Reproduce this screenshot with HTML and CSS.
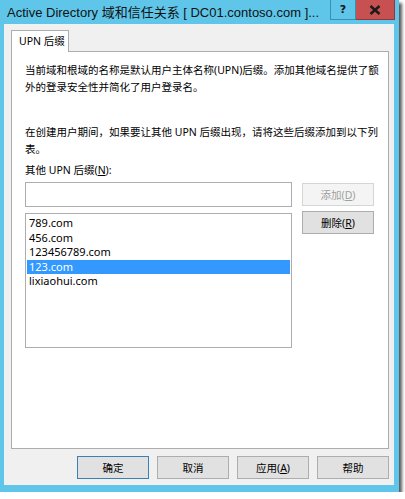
FILE: index.html
```html
<!DOCTYPE html>
<html lang="zh-CN">
<head>
<meta charset="utf-8">
<link rel="stylesheet" href="styles.css">
</head>
<body>
<div class="window">
  <div class="titlebar">
    <div class="title">Active Directory 域和信任关系 [ DC01.contoso.com ]...</div>
    <div class="caption-btns">
      <div class="cbtn help">?</div>
      <div class="cbtn close">
        <svg width="12" height="10" viewBox="0 0 12 10"><path d="M1.5 1 L10.5 9 M10.5 1 L1.5 9" stroke="#1a1a1a" stroke-width="2.4"/></svg>
      </div>
    </div>
  </div>
  <div class="client">
    <div class="tabs">
      <div class="tab">UPN 后缀</div>
    </div>
    <div class="panel">
      <p class="desc">当前域和根域的名称是默认用户主体名称(UPN)后缀。添加其他域名提供了额<br>外的登录安全性并简化了用户登录名。</p>
      <p class="desc second">在创建用户期间，如果要让其他 UPN 后缀出现，请将这些后缀添加到以下列<br>表。</p>
      <div class="label">其他 UPN 后缀(<u>N</u>):</div>
      <div class="row">
        <div class="input"></div>
        <div class="btn disabled">添加(<u>D</u>)</div>
      </div>
      <div class="row">
        <div class="list">
          <div class="item">789.com</div>
          <div class="item">456.com</div>
          <div class="item">123456789.com</div>
          <div class="item selected">123.com</div>
          <div class="item">lixiaohui.com</div>
        </div>
        <div class="btn">删除(<u>R</u>)</div>
      </div>
    </div>
    <div class="footer">
      <div class="btn default">确定</div>
      <div class="btn">取消</div>
      <div class="btn">应用(<u>A</u>)</div>
      <div class="btn">帮助</div>
    </div>
  </div>
</div>
</body>
</html>
```

FILE: styles.css
```css
html, body {
  margin: 0;
  padding: 0;
  background: #ffffff;
}
body {
  font-family: "Noto Sans", "Noto Sans CJK SC", sans-serif;
  font-size: 10.5px;
  color: #000;
}
.window {
  width: 399px;
  height: 492px;
  box-sizing: border-box;
  background: #5fc6ea;
  padding: 0 5px 7px 4px;
  display: flex;
  flex-direction: column;
  box-shadow: 3px 3px 3px rgba(0,0,0,0.65);
}
.titlebar {
  height: 24px;
  display: flex;
  align-items: flex-start;
  flex: none;
}
.title {
  flex: 1;
  min-width: 0;
  overflow: hidden;
  font-family: "Liberation Sans", "Noto Sans CJK SC", sans-serif;
  font-size: 13px;
  line-height: 22px;
  padding-left: 3px;
  padding-top: 2px;
  color: #111;
  white-space: nowrap;
}
.caption-btns {
  display: flex;
  flex: none;
  margin-right: -1px;
}
.cbtn {
  height: 20px;
  display: flex;
  align-items: center;
  justify-content: center;
  box-sizing: border-box;
}
.help {
  width: 26px;
  border: 1px solid #3a8fb5;
  border-top: none;
  font-family: "DejaVu Sans", sans-serif;
  font-weight: bold;
  font-size: 11px;
  color: #111;
}
.close {
  width: 39px;
  background: #c75050;
  border: 1px solid #8e3a3a;
  border-top: none;
  border-left: none;
}
.client {
  flex: 1;
  background: #f0f0f0;
  padding: 6px 5px 6px 7px;
  display: flex;
  flex-direction: column;
}
.tabs {
  display: flex;
  height: 21px;
  position: relative;
  z-index: 1;
}
.tab {
  width: 58px;
  box-sizing: border-box;
  height: 22px;
  border: 1px solid #adadad;
  border-bottom: none;
  background: #fff;
  padding-left: 7px;
  line-height: 21px;
  white-space: nowrap;
}
.panel {
  height: 398px;
  box-sizing: border-box;
  background: #fff;
  border: 1px solid #adadad;
  padding: 10px 14px 0 13px;
}
.desc {
  margin: 0;
  line-height: 17px;
  white-space: nowrap;
}
.desc.second {
  margin-top: 28px;
}
.label {
  margin-top: 4px;
  line-height: 17px;
}
.row {
  display: flex;
  align-items: flex-start;
  gap: 10px;
}
.input {
  margin-top: 3px;
  width: 267px;
  height: 25px;
  box-sizing: border-box;
  border: 1px solid #abadb3;
  background: #fff;
}
.btn {
  width: 72px;
  height: 23px;
  box-sizing: border-box;
  border: 1px solid #adadad;
  background: #e1e1e1;
  display: flex;
  align-items: center;
  justify-content: center;
}
.row .btn {
  margin-top: 4px;
}
.btn.disabled {
  background: #f4f4f4;
  border-color: #d5d5d5;
  color: #a0a0a0;
}
.btn.default {
  border-color: #3c7fb1;
}
.list {
  margin-top: 6px;
  width: 267px;
  height: 135px;
  box-sizing: border-box;
  border: 1px solid #abadb3;
  background: #fff;
  padding: 2px 1px;
}
.item {
  height: 14.5px;
  line-height: 14.5px;
  padding-left: 2px;
  font-size: 11px;
}
.item.selected {
  background: #3399ff;
  color: #fff;
}
.footer {
  display: flex;
  justify-content: flex-end;
  gap: 8px;
  margin-top: 7px;
}
u {
  text-decoration: underline;
}
```
